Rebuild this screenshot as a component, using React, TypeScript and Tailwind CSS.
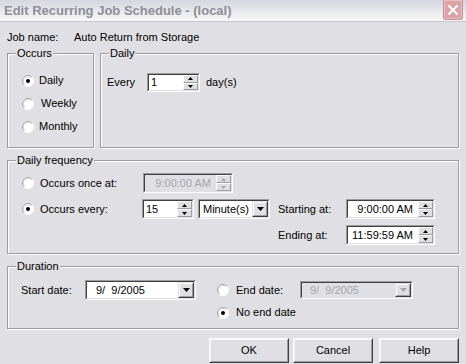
import React from 'react';

// Windows XP silver palette
const FACE = 'bg-[#e0dfe3]';

function Tri({ dir, disabled, big }: { dir: 'up' | 'down'; disabled?: boolean; big?: boolean }) {
  const fill = disabled ? '#a5a5aa' : '#000';
  if (big) {
    return (
      <svg width="7" height="4" viewBox="0 0 7 4">
        <path d="M0 0h7L3.5 4z" fill={fill} />
      </svg>
    );
  }
  return (
    <svg width="5" height="3" viewBox="0 0 5 3">
      {dir === 'up' ? <path d="M2.5 0L5 3H0z" fill={fill} /> : <path d="M0 0h5L2.5 3z" fill={fill} />}
    </svg>
  );
}

function Field({ className = '', disabled, children }: { className?: string; disabled?: boolean; children: React.ReactNode }) {
  return (
    <div className={`border border-t-[#9d9da1] border-l-[#9d9da1] border-b-white border-r-white ${className}`}>
      <div
        className={`flex h-full border border-t-[#404040] border-l-[#404040] border-b-[#e0dfe3] border-r-[#e0dfe3] ${
          disabled ? 'bg-[#e0dfe3] text-[#a5a5aa]' : 'bg-white text-black'
        }`}
      >
        {children}
      </div>
    </div>
  );
}

function SpinHalf({ dir, disabled }: { dir: 'up' | 'down'; disabled?: boolean }) {
  return (
    <div className={`flex flex-1 items-center justify-center border border-t-white border-l-white border-b-[#9d9da1] border-r-[#9d9da1] ${FACE}`}>
      <Tri dir={dir} disabled={disabled} />
    </div>
  );
}

function SpinBox({ value, className, disabled, right }: { value: string; className: string; disabled?: boolean; right?: boolean }) {
  return (
    <Field className={className} disabled={disabled}>
      <span className={`flex flex-1 items-center ${right ? 'justify-end pr-[5px]' : 'pl-[2px]'}`}>{value}</span>
      <div className="flex w-[15px] flex-col">
        <SpinHalf dir="up" disabled={disabled} />
        <SpinHalf dir="down" disabled={disabled} />
      </div>
    </Field>
  );
}

function Combo({ value, className, disabled, pad }: { value: string; className: string; disabled?: boolean; pad: string }) {
  return (
    <Field className={className} disabled={disabled}>
      <span className={`flex flex-1 items-center ${pad}`}>{value}</span>
      <div className="w-[16px] border border-t-[#e0dfe3] border-l-[#e0dfe3] border-b-[#404040] border-r-[#404040]">
        <div className={`flex h-full items-center justify-center border border-t-white border-l-white border-b-[#9d9da1] border-r-[#9d9da1] ${FACE}`}>
          <Tri dir="down" big disabled={disabled} />
        </div>
      </div>
    </Field>
  );
}

function Radio({ checked }: { checked?: boolean }) {
  return (
    <svg width="12" height="12" viewBox="0 0 12 12" className="shrink-0">
      <circle cx="6" cy="6" r="5.5" fill="#fff" />
      <path d="M2.1 9.9A5.5 5.5 0 0 1 9.9 2.1" stroke="#a8a8ac" fill="none" />
      <path d="M9.9 2.1A5.5 5.5 0 0 1 2.1 9.9" stroke="#fff" fill="none" />
      <path d="M2.8 9.2A4.5 4.5 0 0 1 9.2 2.8" stroke="#d6d6da" fill="none" />
      {checked && <circle cx="6" cy="6" r="2" fill="#000" />}
    </svg>
  );
}

function Group({ label, className = '', children }: { label: string; className?: string; children?: React.ReactNode }) {
  return (
    <div className={`border border-[#9d9da1] shadow-[inset_1px_1px_0_#fff,1px_1px_0_#fff] ${className}`}>
      <div className={`-mt-[7px] ml-[8px] w-fit px-[1px] leading-[13px] ${FACE}`}>{label}</div>
      {children}
    </div>
  );
}

function Button({ label, className = '' }: { label: string; className?: string }) {
  return (
    <div className={`h-[25px] w-[80px] border border-t-white border-l-white border-b-[#404040] border-r-[#404040] ${className}`}>
      <div className={`flex h-full items-center justify-center border border-t-[#f4f4f6] border-l-[#f4f4f6] border-b-[#9d9da1] border-r-[#9d9da1] ${FACE}`}>
        {label}
      </div>
    </div>
  );
}

export default function App() {
  return (
    <div className={`flex h-[364px] w-[466px] flex-col overflow-hidden ${FACE} font-['Liberation_Sans',Arial,sans-serif] text-[11px] leading-[13px] text-black`}>
      {/* title bar */}
      <div className="flex h-[22px] shrink-0 items-start justify-between border-b border-[#c6c6ce] bg-gradient-to-b from-[#d5d6df] to-[#f8f8f9] pl-[4px] pr-[3px]">
        <span className="mt-[3px] text-[13px] font-bold leading-[15px] text-[#8e8e96]">Edit Recurring Job Schedule - (local)</span>
        <div className="flex h-[20px] w-[20px] items-center justify-center rounded-b-[3px] border border-t-0 border-[#c48e92] bg-[#daa3a7] shadow-[inset_0_0_0_1px_#e8bfc2]">
          <svg width="12" height="12" viewBox="0 0 12 12">
            <path d="M1.5 1.5l9 9M10.5 1.5l-9 9" stroke="#fff" strokeWidth="2" />
          </svg>
        </div>
      </div>

      <div className="flex flex-col px-[7px]">
        {/* job name */}
        <div className="mt-[9px] flex">
          <span className="w-[67px]">Job name:</span>
          <span>Auto Return from Storage</span>
        </div>

        {/* occurs + daily */}
        <div className="mt-[9px] flex">
          <Group label="Occurs" className="h-[95px] w-[87px]">
            <div className="mt-[14px] flex flex-col gap-[10px] pl-[14px]">
              <div className="flex items-center gap-[5px]">
                <Radio checked />
                <span>Daily</span>
              </div>
              <div className="flex items-center gap-[5px]">
                <Radio />
                <span className="ml-[2px]">Weekly</span>
              </div>
              <div className="flex items-center gap-[5px]">
                <Radio />
                <span>Monthly</span>
              </div>
            </div>
          </Group>
          <Group label="Daily" className="ml-[6px] h-[95px] flex-1">
            <div className="mt-[13px] flex h-[19px] items-center pl-[6px]">
              <span className="w-[40px]">Every</span>
              <SpinBox value="1" className="h-[19px] w-[53px]" />
              <span className="ml-[6px]">day(s)</span>
            </div>
          </Group>
        </div>

        {/* daily frequency */}
        <Group label="Daily frequency" className="mt-[12px] h-[94px]">
          <div className="mt-[6px] flex flex-col gap-[6px] pl-[14px]">
            <div className="flex h-[20px] items-center">
              <Radio />
              <span className="ml-[6px] w-[103px]">Occurs once at:</span>
              <SpinBox value="9:00:00 AM" className="h-[20px] w-[90px]" disabled right />
            </div>
            <div className="flex h-[20px] items-center">
              <Radio checked />
              <span className="ml-[6px] w-[102px]">Occurs every:</span>
              <SpinBox value="15" className="h-[20px] w-[52px]" />
              <Combo value="Minute(s)" className="ml-[4px] h-[20px] w-[72px]" pad="pl-[3px]" />
              <span className="ml-[8px] w-[68px]">Starting at:</span>
              <SpinBox value="9:00:00 AM" className="h-[20px] w-[89px]" right />
            </div>
            <div className="flex h-[20px] items-center">
              <span className="ml-[256px] w-[68px]">Ending at:</span>
              <SpinBox value="11:59:59 AM" className="h-[20px] w-[89px]" right />
            </div>
          </div>
        </Group>

        {/* duration */}
        <Group label="Duration" className="mt-[12px] h-[63px]">
          <div className="mt-[7px] flex pl-[13px]">
            <div className="flex h-[20px] items-center">
              <span className="w-[64px]">Start date:</span>
              <Combo value="9/  9/2005" className="h-[20px] w-[111px] whitespace-pre" pad="pl-[9px]" />
            </div>
            <div className="ml-[21px] flex flex-col gap-[6px]">
              <div className="flex h-[20px] items-center">
                <Radio />
                <span className="ml-[7px] w-[64px]">End date:</span>
                <Combo value="9/  9/2005" className="h-[18px] w-[113px] whitespace-pre" pad="pl-[8px]" disabled />
              </div>
              <div className="flex h-[13px] items-center">
                <Radio checked />
                <span className="ml-[7px]">No end date</span>
              </div>
            </div>
          </div>
        </Group>

        {/* buttons */}
        <div className="mt-[9px] flex justify-end">
          <Button label="OK" />
          <Button label="Cancel" className="ml-[4px]" />
          <Button label="Help" className="ml-[6px]" />
        </div>
      </div>
    </div>
  );
}
